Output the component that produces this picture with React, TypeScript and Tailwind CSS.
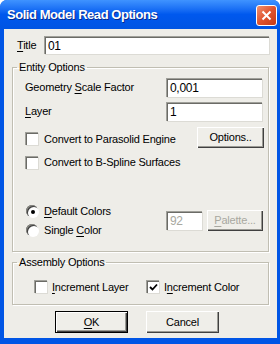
import type { ReactNode } from 'react';

const sunken =
  'bg-white border-t border-l border-[#a0a09a] border-r-white border-b-white shadow-[inset_1px_1px_0_#6b6b66,1px_1px_0_#dcdbd5]';

function Field({ value, className, disabled }: { value: string; className: string; disabled?: boolean }) {
  return (
    <div
      className={`${sunken} ${disabled ? 'bg-[#eeede8] text-[#a8a8a0]' : ''} ${className} flex items-center pl-[3px] text-[12px] tracking-[-0.3px]`}
    >
      {value}
    </div>
  );
}

function Button({ children, className, disabled, isDefault }: { children: ReactNode; className: string; disabled?: boolean; isDefault?: boolean }) {
  return (
    <button
      type="button"
      className={`${className} flex items-center justify-center bg-[#efeee9] ${
        isDefault ? 'border border-black' : ''
      } ${disabled ? 'text-[#a8a8a0]' : 'text-black'}`}
    >
      <span className="flex h-full w-full items-center justify-center shadow-[inset_1px_1px_0_#ffffff,inset_-1px_-1px_0_#404040,inset_-2px_-2px_0_#9a9a94]">
        {children}
      </span>
    </button>
  );
}

function Check({ checked }: { checked?: boolean }) {
  return (
    <span className={`${sunken} h-[13px] w-[13px] shrink-0 flex items-center justify-center`}>
      {checked && (
        <svg width="9" height="9" viewBox="0 0 9 9">
          <path d="M1 4 L3.5 6.5 L8 1.5" stroke="#000" strokeWidth="1.8" fill="none" />
        </svg>
      )}
    </span>
  );
}

function Radio({ checked }: { checked?: boolean }) {
  return (
    <span className="h-[12px] w-[12px] shrink-0 rounded-full bg-white shadow-[inset_1px_1px_0_#8a8a84,inset_2px_2px_0_#404040,1px_1px_0_#fff] flex items-center justify-center">
      {checked && <span className="ml-[1px] mt-[1px] h-[4px] w-[4px] rounded-full bg-black" />}
    </span>
  );
}

const U = ({ children }: { children: ReactNode }) => <span className="underline underline-offset-[2px]">{children}</span>;

function Group({ title, className, children }: { title: string; className: string; children: ReactNode }) {
  return (
    <fieldset className="border border-[#c0beb2] p-0 shadow-[inset_1px_1px_0_#fff,1px_1px_0_#fff]">
      <legend className="ml-[4px] px-[2px] leading-[13px]">{title}</legend>
      <div className={className}>{children}</div>
    </fieldset>
  );
}

export default function App() {
  return (
    <div className="flex h-[344px] w-[280px] flex-col rounded-t-[7px] bg-[#0055e5] font-['Liberation_Sans',Arial,sans-serif] text-[11px] tracking-[-0.2px] text-black">
      {/* title bar */}
      <div className="flex h-[29px] items-center rounded-t-[7px] bg-gradient-to-b from-[#3f93ff] via-[#0058ee] to-[#0054e3] pl-[7px] pr-[3px]">
        <span className="text-[13px] font-bold tracking-[-0.45px] text-white [text-shadow:1px_1px_0_#0a2a8a]">
          Solid Model Read Options
        </span>
        <span className="ml-auto mt-[1px] flex h-[21px] w-[21px] items-center justify-center rounded-[3px] border border-white bg-gradient-to-br from-[#f0906f] via-[#e0532e] to-[#c63a16]">
          <svg width="11" height="11" viewBox="0 0 11 11">
            <path d="M1.5 1.5 L9.5 9.5 M9.5 1.5 L1.5 9.5" stroke="#fff" strokeWidth="2" />
          </svg>
        </span>
      </div>

      {/* body */}
      <div className="mb-[6px] ml-[4px] mr-[3px] flex flex-1 flex-col bg-[#eeede8] px-[8px] pt-[7px]">
        <div className="flex h-[18px] items-center">
          <span className="ml-[5px] w-[27px]">
            <U>T</U>itle
          </span>
          <Field value="01" className="h-[18px] flex-1" />
        </div>

        <div className="mt-[7px]">
          <Group title="Entity Options" className="pb-[14px] pl-[12px] pr-[4px] pt-[4px]">
            <div className="flex h-[19px] items-center">
              <span className="w-[141px]">
                Geometry <U>S</U>cale Factor
              </span>
              <Field value="0,001" className="h-[19px] w-[96px]" />
            </div>
            <div className="mt-[5px] flex h-[19px] items-center">
              <span className="w-[141px]">
                <U>L</U>ayer
              </span>
              <Field value="1" className="h-[19px] w-[96px]" />
            </div>
            <div className="mt-[6px] flex h-[21px] items-end">
              <span className="mb-[1px] flex items-center gap-[6px]">
                <Check />
                Convert to Parasolid Engine
              </span>
              <Button className="ml-auto h-[21px] w-[67px]">Options..</Button>
            </div>
            <div className="mt-[6px] flex items-center gap-[6px]">
              <Check />
              Convert to B-Spline Surfaces
            </div>
            <div className="mt-[34px] flex items-center">
              <div className="flex w-[141px] flex-col gap-[6px] pl-[1px]">
                <span className="flex h-[13px] items-center gap-[6px]">
                  <Radio checked />
                  <span>
                    <U>D</U>efault Colors
                  </span>
                </span>
                <span className="flex h-[13px] items-center gap-[6px]">
                  <Radio />
                  <span>
                    Single <U>C</U>olor
                  </span>
                </span>
              </div>
              <Field value="92" disabled className="h-[19px] w-[36px]" />
              <Button disabled className="ml-[5px] h-[21px] w-[56px]">
                <span>
                  <U>P</U>alette...
                </span>
              </Button>
            </div>
          </Group>
        </div>

        <div className="mt-[4px]">
          <Group title="Assembly Options" className="pb-[9px] pl-[21px] pt-[10px]">
            <div className="flex items-center">
              <span className="flex w-[112px] items-center gap-[5px]">
                <Check />
                <span>
                  <U>I</U>ncrement Layer
                </span>
              </span>
              <span className="flex items-center gap-[5px]">
                <Check checked />
                <span>
                  I<U>n</U>crement Color
                </span>
              </span>
            </div>
          </Group>
        </div>

        <div className="ml-[43px] mt-[6px] flex gap-[18px]">
          <Button isDefault className="h-[22px] w-[73px]">
            <U>O</U>K
          </Button>
          <Button className="h-[22px] w-[73px]">Cancel</Button>
        </div>
      </div>
    </div>
  );
}
